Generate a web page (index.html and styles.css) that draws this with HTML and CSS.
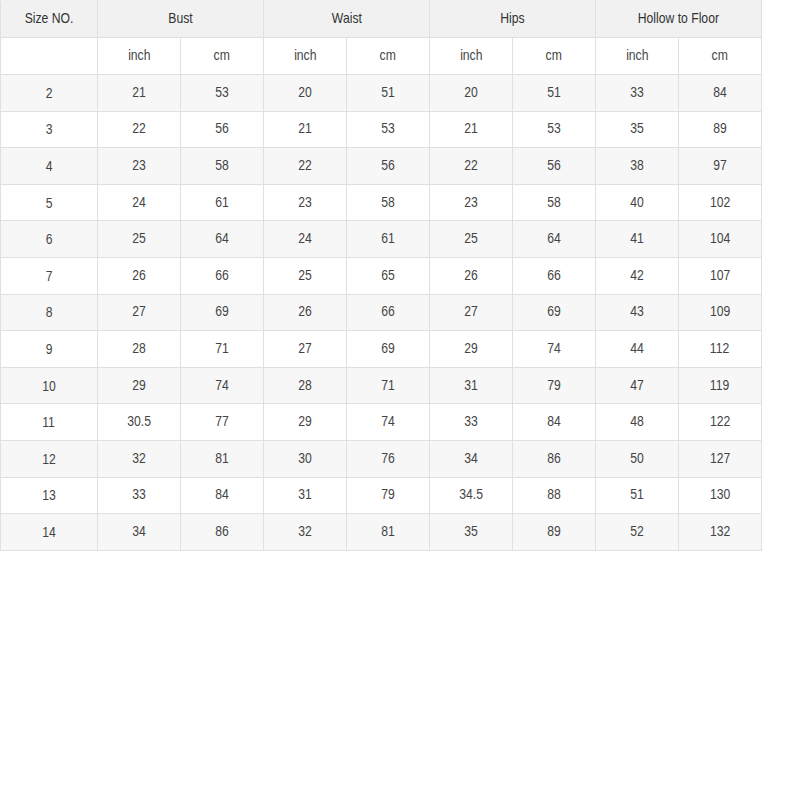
FILE: index.html
```html
<!DOCTYPE html>
<html>
<head>
<meta charset="utf-8">
<link rel="stylesheet" href="styles.css">
</head>
<body>
<table class="size-table">
  <colgroup>
    <col class="c-first">
    <col class="c"><col class="c"><col class="c"><col class="c">
    <col class="c"><col class="c"><col class="c"><col class="c">
  </colgroup>
  <thead>
    <tr class="head">
      <th><span>Size NO.</span></th>
      <th colspan="2"><span>Bust</span></th>
      <th colspan="2"><span>Waist</span></th>
      <th colspan="2"><span>Hips</span></th>
      <th colspan="2"><span>Hollow to Floor</span></th>
    </tr>
    <tr class="sub">
      <td></td>
      <td><span>inch</span></td><td><span>cm</span></td>
      <td><span>inch</span></td><td><span>cm</span></td>
      <td><span>inch</span></td><td><span>cm</span></td>
      <td><span>inch</span></td><td><span>cm</span></td>
    </tr>
  </thead>
  <tbody>
    <tr class="alt"><td class="sz"><span>2</span></td><td><span>21</span></td><td><span>53</span></td><td><span>20</span></td><td><span>51</span></td><td><span>20</span></td><td><span>51</span></td><td><span>33</span></td><td><span>84</span></td></tr>
    <tr><td class="sz"><span>3</span></td><td><span>22</span></td><td><span>56</span></td><td><span>21</span></td><td><span>53</span></td><td><span>21</span></td><td><span>53</span></td><td><span>35</span></td><td><span>89</span></td></tr>
    <tr class="alt"><td class="sz"><span>4</span></td><td><span>23</span></td><td><span>58</span></td><td><span>22</span></td><td><span>56</span></td><td><span>22</span></td><td><span>56</span></td><td><span>38</span></td><td><span>97</span></td></tr>
    <tr><td class="sz"><span>5</span></td><td><span>24</span></td><td><span>61</span></td><td><span>23</span></td><td><span>58</span></td><td><span>23</span></td><td><span>58</span></td><td><span>40</span></td><td><span>102</span></td></tr>
    <tr class="alt"><td class="sz"><span>6</span></td><td><span>25</span></td><td><span>64</span></td><td><span>24</span></td><td><span>61</span></td><td><span>25</span></td><td><span>64</span></td><td><span>41</span></td><td><span>104</span></td></tr>
    <tr><td class="sz"><span>7</span></td><td><span>26</span></td><td><span>66</span></td><td><span>25</span></td><td><span>65</span></td><td><span>26</span></td><td><span>66</span></td><td><span>42</span></td><td><span>107</span></td></tr>
    <tr class="alt"><td class="sz"><span>8</span></td><td><span>27</span></td><td><span>69</span></td><td><span>26</span></td><td><span>66</span></td><td><span>27</span></td><td><span>69</span></td><td><span>43</span></td><td><span>109</span></td></tr>
    <tr><td class="sz"><span>9</span></td><td><span>28</span></td><td><span>71</span></td><td><span>27</span></td><td><span>69</span></td><td><span>29</span></td><td><span>74</span></td><td><span>44</span></td><td><span>112</span></td></tr>
    <tr class="alt"><td class="sz"><span>10</span></td><td><span>29</span></td><td><span>74</span></td><td><span>28</span></td><td><span>71</span></td><td><span>31</span></td><td><span>79</span></td><td><span>47</span></td><td><span>119</span></td></tr>
    <tr><td class="sz"><span>11</span></td><td><span>30.5</span></td><td><span>77</span></td><td><span>29</span></td><td><span>74</span></td><td><span>33</span></td><td><span>84</span></td><td><span>48</span></td><td><span>122</span></td></tr>
    <tr class="alt"><td class="sz"><span>12</span></td><td><span>32</span></td><td><span>81</span></td><td><span>30</span></td><td><span>76</span></td><td><span>34</span></td><td><span>86</span></td><td><span>50</span></td><td><span>127</span></td></tr>
    <tr><td class="sz"><span>13</span></td><td><span>33</span></td><td><span>84</span></td><td><span>31</span></td><td><span>79</span></td><td><span>34.5</span></td><td><span>88</span></td><td><span>51</span></td><td><span>130</span></td></tr>
    <tr class="alt"><td class="sz"><span>14</span></td><td><span>34</span></td><td><span>86</span></td><td><span>32</span></td><td><span>81</span></td><td><span>35</span></td><td><span>89</span></td><td><span>52</span></td><td><span>132</span></td></tr>
  </tbody>
</table>
</body>
</html>
```

FILE: styles.css
```css
html, body {
  margin: 0;
  padding: 0;
  background: #ffffff;
}

.size-table {
  border-collapse: collapse;
  table-layout: fixed;
  width: 761px;
  font-family: "Liberation Sans", Arial, sans-serif;
  font-size: 14.5px;
  color: #444;
}

.c-first { width: 97px; }
.c { width: 83px; }

.size-table th,
.size-table td {
  border: 1px solid #e0e0e0;
  padding: 0 0 2px 0;
  text-align: center;
  vertical-align: middle;
  font-weight: normal;
}

.size-table span {
  display: inline-block;
  transform: scaleX(0.84);
}

.head th {
  height: 34px;
  background: #f1f1f1;
  color: #333;
  border-top-color: #f1f1f1;
}

.sub td {
  height: 34px;
  background: #ffffff;
}

tbody tr td {
  height: 33.6px;
}

tbody tr.alt td {
  background: #f7f7f7;
}

tbody td.sz span {
  position: relative;
  top: 1px;
}
```
